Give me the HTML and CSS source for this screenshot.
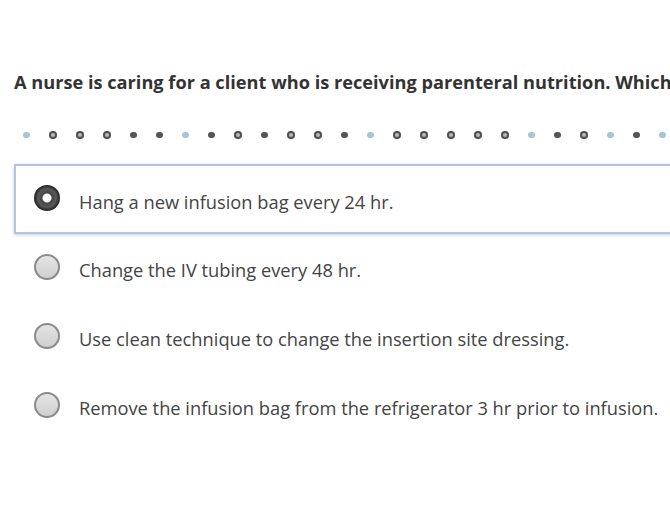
FILE: index.html
```html
<!DOCTYPE html>
<html lang="en">
<head>
    <meta charset="UTF-8">
    <meta name="viewport" content="width=device-width, initial-scale=1.0">
    <title>Question</title>
    <link rel="stylesheet" href="styles.css">
</head>
<body>
    <div class="quiz">
        <h2 class="question">A nurse is caring for a client who is receiving parenteral nutrition. Which action should the nurse take?</h2>

        <div class="progress">
            <span class="dot seen"></span>
            <span class="dot ring"></span>
            <span class="dot ring"></span>
            <span class="dot ring"></span>
            <span class="dot done"></span>
            <span class="dot done"></span>
            <span class="dot seen"></span>
            <span class="dot done"></span>
            <span class="dot ring"></span>
            <span class="dot done"></span>
            <span class="dot ring"></span>
            <span class="dot ring"></span>
            <span class="dot done"></span>
            <span class="dot seen"></span>
            <span class="dot ring"></span>
            <span class="dot ring"></span>
            <span class="dot ring"></span>
            <span class="dot ring"></span>
            <span class="dot ring"></span>
            <span class="dot seen"></span>
            <span class="dot done"></span>
            <span class="dot ring"></span>
            <span class="dot seen"></span>
            <span class="dot done"></span>
            <span class="dot seen"></span>
        </div>

        <ul class="options">
            <li class="option selected">
                <span class="radio"></span>
                <span class="label">Hang a new infusion bag every 24 hr.</span>
            </li>
            <li class="option">
                <span class="radio"></span>
                <span class="label">Change the IV tubing every 48 hr.</span>
            </li>
            <li class="option">
                <span class="radio"></span>
                <span class="label">Use clean technique to change the insertion site dressing.</span>
            </li>
            <li class="option">
                <span class="radio"></span>
                <span class="label">Remove the infusion bag from the refrigerator 3 hr prior to infusion.</span>
            </li>
        </ul>
    </div>
</body>
</html>
```

FILE: styles.css
```css
body {
    font-family: "Open Sans", "Liberation Sans", sans-serif;
    background-color: #fff;
    margin: 0;
    padding: 0;
    overflow: hidden;
}
.quiz {
    width: 720px;
    padding: 69px 0 0 14px;
}
.question {
    margin: 0;
    font-size: 18.2px;
    font-weight: bold;
    line-height: 26px;
    color: #333;
    white-space: nowrap;
}
.progress {
    display: flex;
    align-items: center;
    gap: 19.5px;
    height: 10px;
    margin: 35px 0 0 9px;
}
.dot {
    width: 6.5px;
    height: 6.5px;
    border-radius: 50%;
    flex: none;
}
.dot.seen {
    background-color: #a6c6d4;
}
.dot.done {
    background-color: #555;
}
.dot.ring {
    box-sizing: border-box;
    width: 7.5px;
    height: 7.5px;
    border: 2px solid #4f4f4f;
    background-color: #b5b5b5;
}
.options {
    list-style: none;
    margin: 24px 0 0;
    padding: 0;
}
.option {
    display: flex;
    align-items: center;
    height: 69px;
    padding-left: 20px;
    box-sizing: border-box;
}
.option.selected {
    border: 2px solid #b4c5dd;
    border-right: none;
    box-shadow: 0 1px 3px rgba(90, 110, 150, 0.35);
    height: 70px;
    margin-bottom: -1px;
    padding-left: 18px;
}
.radio {
    box-sizing: border-box;
    width: 26px;
    height: 26px;
    border-radius: 50%;
    border: 2px solid #8a8a8a;
    background: linear-gradient(#e4e4e4, #cfcfcf);
    flex: none;
    margin-top: -2px;
}
.selected .radio {
    border: none;
    background: radial-gradient(circle, #fff 0, #fff 4px, #444 5px, #5a5a5a 9px, #1f1f1f 13px);
}
.label {
    margin-left: 19px;
    margin-top: 4px;
    font-size: 18.3px;
    color: #444;
    white-space: nowrap;
}
```
